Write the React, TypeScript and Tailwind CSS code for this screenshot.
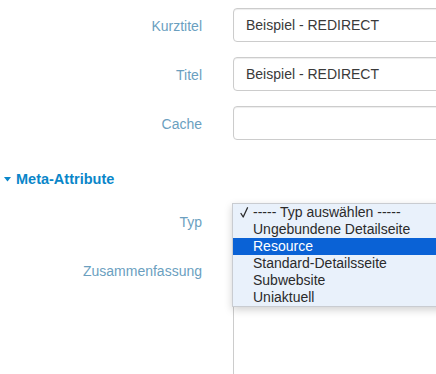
import React from 'react'

const labelCls = "w-[202px] shrink-0 pt-[8px] text-right text-[14px] leading-[20px] text-[#6b9fbf]"
const inputCls = "h-[34px] w-[260px] shrink-0 rounded-[4px] border border-[#cccccc] bg-white px-[12px] text-[14px] text-[#3a3a3a] shadow-[inset_0_1px_1px_rgba(0,0,0,0.075)]"

const options = [
  "----- Typ auswählen -----",
  "Ungebundene Detailseite",
  "Resource",
  "Standard-Detailsseite",
  "Subwebsite",
  "Uniaktuell",
]

const Field = ({ label, children }: { label: string; children: React.ReactNode }) => (
  <div className="flex gap-[31px]">
    <label className={labelCls}>{label}</label>
    {children}
  </div>
)

export default function App() {
  return (
    <div
      className="relative h-[374px] w-[436px] overflow-hidden bg-white"
      style={{ fontFamily: '"Liberation Sans", Arial, sans-serif' }}
    >
      <div className="flex flex-col gap-[15px] pt-[8px]">
        <Field label="Kurztitel">
          <input className={inputCls} defaultValue="Beispiel - REDIRECT" />
        </Field>
        <Field label="Titel">
          <input className={inputCls} defaultValue="Beispiel - REDIRECT" />
        </Field>
        <Field label="Cache">
          <input className={inputCls} defaultValue="" />
        </Field>
      </div>

      {/* Meta section header */}
      <div className="mt-[29px] flex items-center gap-[5px] pl-[4px] text-[14.5px] font-bold leading-[20px] text-[#0a86c9]">
        <svg width="7" height="5" viewBox="0 0 7 5" className="mt-[1px]">
          <path d="M0 0 H7 L3.5 4.5 Z" fill="#0a86c9" />
        </svg>
        Meta-Attribute
      </div>

      <div className="mt-[15px] flex flex-col gap-[15px]">
        <Field label="Typ">
          <div className="relative">
            <div className={inputCls} />
            {/* open native-like select menu */}
            <div className="absolute left-[-1px] top-[-1px] z-10 w-[240px] border border-[#c9ccd1] bg-[#e9f1fb] text-[14px] leading-[17px] text-[#2b2b2b] shadow-[0_3px_8px_rgba(0,0,0,0.18)]">
              {options.map((o, i) => (
                <div
                  key={o}
                  className={
                    "flex h-[17px] items-center " +
                    (i === 0 ? "pl-[7px] " : "pl-[20px] ") +
                    (i === 2 ? "bg-[#0a62d6] text-white" : "")
                  }
                >
                  {i === 0 && (
                    <svg width="13" height="11" viewBox="0 0 13 11" className="shrink-0">
                      <path d="M1 6.5 L3.2 10 L7.5 0.8" fill="none" stroke="#2b2b2b" strokeWidth="1.3" strokeLinecap="round" strokeLinejoin="round" />
                    </svg>
                  )}
                  {o}
                </div>
              ))}
            </div>
          </div>
        </Field>
        <Field label="Zusammenfassung">
          <textarea className="h-[140px] w-[260px] shrink-0 resize-none rounded-[4px] border border-[#cccccc] bg-white" />
        </Field>
      </div>
    </div>
  )
}
